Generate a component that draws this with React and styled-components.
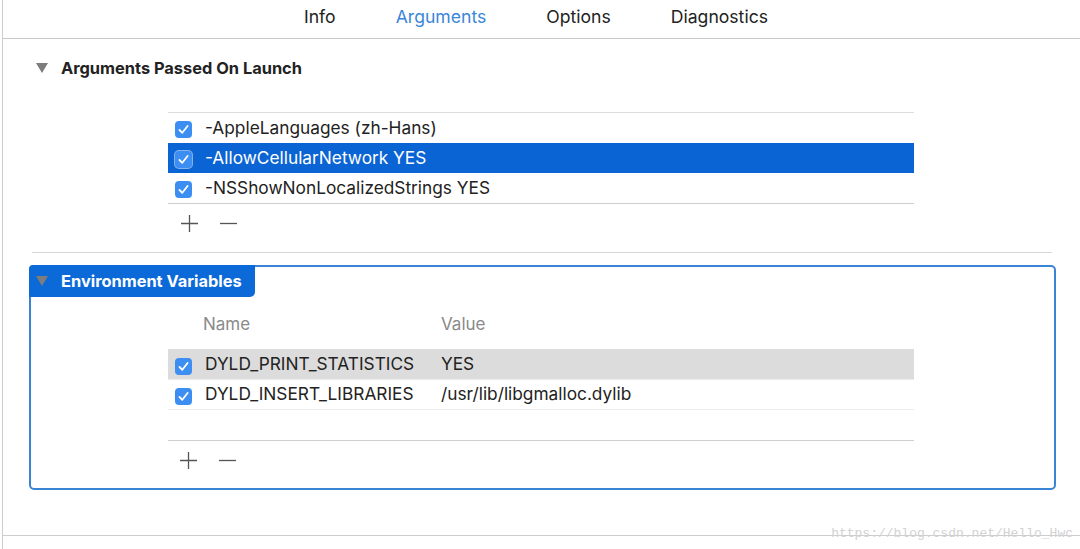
import React from "react";
import styled, { createGlobalStyle } from "styled-components";

const GlobalStyle = createGlobalStyle`
  html, body {
    margin: 0;
    padding: 0;
    background: #ffffff;
  }
  body {
    font-family: Inter, Roboto, "Noto Sans", sans-serif;
    color: #222222;
  }
`;

const Page = styled.div`
  position: relative;
  width: 1078px;
  height: 549px;
  margin-left: 2px;
  border-left: 1px solid #cdcdcd;
  overflow: hidden;
`;

const TabBar = styled.div`
  height: 38px;
  display: flex;
  align-items: center;
  gap: 60px;
  padding-left: 301px;
  border-bottom: 1px solid #c8c8c8;
`;

const Tab = styled.div`
  font-size: 17.6px;
  color: ${(p) => (p.$active ? "#3a86d8" : "#222222")};
  margin-top: -6px;
`;

const SectionHeader = styled.div`
  height: 58px;
  display: flex;
  align-items: center;
  padding-left: 33px;
  gap: 13px;
  font-size: 16.4px;
  font-weight: 700;
  color: #222222;
`;

const Triangle = styled.span`
  width: 0;
  height: 0;
  border-left: 6px solid transparent;
  border-right: 6px solid transparent;
  border-top: 10px solid #7d7d7d;
`;

const Table = styled.div`
  margin-left: ${(p) => p.$left}px;
  margin-top: ${(p) => p.$top}px;
  width: 746px;
  border-top: 1px solid #dcdcdc;
  border-bottom: 1px solid #cfcfcf;
  min-height: ${(p) => p.$minHeight || 0}px;
`;

const Row = styled.div`
  height: 30px;
  display: flex;
  align-items: center;
  padding-left: 7px;
  font-size: 17.3px;
  background: ${(p) =>
    p.$selected === "focus" ? "#0b64d4" : p.$selected === "dim" ? "#dcdcdc" : "transparent"};
  color: ${(p) => (p.$selected === "focus" ? "#ffffff" : "#222222")};
  border-bottom: ${(p) => (p.$lined ? "1px solid #ececec" : "none")};
  box-sizing: border-box;
`;

const Check = styled.span`
  width: 17px;
  height: 17px;
  border-radius: 4px;
  background: #3c8ef2;
  display: flex;
  align-items: center;
  justify-content: center;
  margin-right: 13px;
  margin-top: 3px;
  flex-shrink: 0;
  box-shadow: ${(p) => (p.$onBlue ? "0 0 0 1px rgba(255,255,255,0.5)" : "none")};
`;

const Cell = styled.span`
  width: ${(p) => p.$width || "auto"};
  flex-shrink: 0;
  margin-top: -2px;
`;

const Actions = styled.div`
  height: 38px;
  display: flex;
  align-items: center;
  gap: 20px;
  padding-left: ${(p) => p.$left}px;
  color: #555555;
`;

const Separator = styled.div`
  margin-top: 10px;
  margin-left: 29px;
  width: 1020px;
  border-top: 1px solid #d6d6d6;
`;

const EnvBox = styled.div`
  margin-top: 12px;
  margin-left: 26px;
  width: 1023px;
  height: 221px;
  border: 2px solid #3a84d6;
  border-radius: 5px;
`;

const EnvHeader = styled.div`
  width: 226px;
  height: 32px;
  margin: -2px 0 0 -2px;
  background: #0b6ad8;
  border-radius: 4px 0 5px 0;
  display: flex;
  align-items: center;
  padding-left: 7px;
  gap: 13px;
  font-size: 16.4px;
  font-weight: 700;
  color: #ffffff;
  box-sizing: border-box;
`;

const ColumnHeader = styled.div`
  display: flex;
  margin-top: 16px;
  height: 24px;
  align-items: center;
  padding-left: 172px;
  font-size: 17px;
  color: #8a8a8a;
`;

const Footer = styled.div`
  margin-top: 45px;
  border-top: 1px solid #cdcdcd;
`;

const Watermark = styled.div`
  position: absolute;
  right: 8px;
  top: 526px;
  font-family: "Liberation Mono", "DejaVu Sans Mono", monospace;
  font-size: 13px;
  color: #d2d2d2;
`;

const Plus = () => (
  <svg width="19" height="19" viewBox="0 0 19 19">
    <path d="M9.5 1v17M1 9.5h17" stroke="#555" strokeWidth="1.3" fill="none" />
  </svg>
);

const Minus = () => (
  <svg width="19" height="19" viewBox="0 0 19 19">
    <path d="M1 9.5h17" stroke="#555" strokeWidth="1.3" fill="none" />
  </svg>
);

const CheckMark = () => (
  <svg width="11" height="11" viewBox="0 0 11 11">
    <path d="M1.5 6l2.8 2.8L9.6 2" stroke="#fff" strokeWidth="1.8" fill="none" strokeLinecap="round" strokeLinejoin="round" />
  </svg>
);

const args = [
  { text: "-AppleLanguages (zh-Hans)" },
  { text: "-AllowCellularNetwork YES", selected: "focus" },
  { text: "-NSShowNonLocalizedStrings YES" },
];

const envVars = [
  { name: "DYLD_PRINT_STATISTICS", value: "YES", selected: "dim" },
  { name: "DYLD_INSERT_LIBRARIES", value: "/usr/lib/libgmalloc.dylib" },
];

export default function App() {
  return (
    <>
      <GlobalStyle />
      <Page>
        <TabBar>
          <Tab>Info</Tab>
          <Tab $active>Arguments</Tab>
          <Tab>Options</Tab>
          <Tab>Diagnostics</Tab>
        </TabBar>

        <SectionHeader>
          <Triangle />
          Arguments Passed On Launch
        </SectionHeader>

        <Table $left={165} $top={15}>
          {args.map((a) => (
            <Row key={a.text} $selected={a.selected}>
              <Check $onBlue={a.selected === "focus"}>
                <CheckMark />
              </Check>
              <Cell>{a.text}</Cell>
            </Row>
          ))}
        </Table>
        <Actions $left={177}>
          <Plus />
          <Minus />
        </Actions>

        <Separator />

        <EnvBox>
          <EnvHeader>
            <Triangle />
            Environment Variables
          </EnvHeader>
          <ColumnHeader>
            <Cell $width="238px">Name</Cell>
            <Cell>Value</Cell>
          </ColumnHeader>
          <Table $left={137} $top={12} $minHeight={90}>
            {envVars.map((v) => (
              <Row key={v.name} $selected={v.selected} $lined>
                <Check>
                  <CheckMark />
                </Check>
                <Cell $width="236px">{v.name}</Cell>
                <Cell>{v.value}</Cell>
              </Row>
            ))}
          </Table>
          <Actions $left={148}>
            <Plus />
            <Minus />
          </Actions>
        </EnvBox>

        <Footer />
        <Watermark>https://blog.csdn.net/Hello_Hwc</Watermark>
      </Page>
    </>
  );
}
